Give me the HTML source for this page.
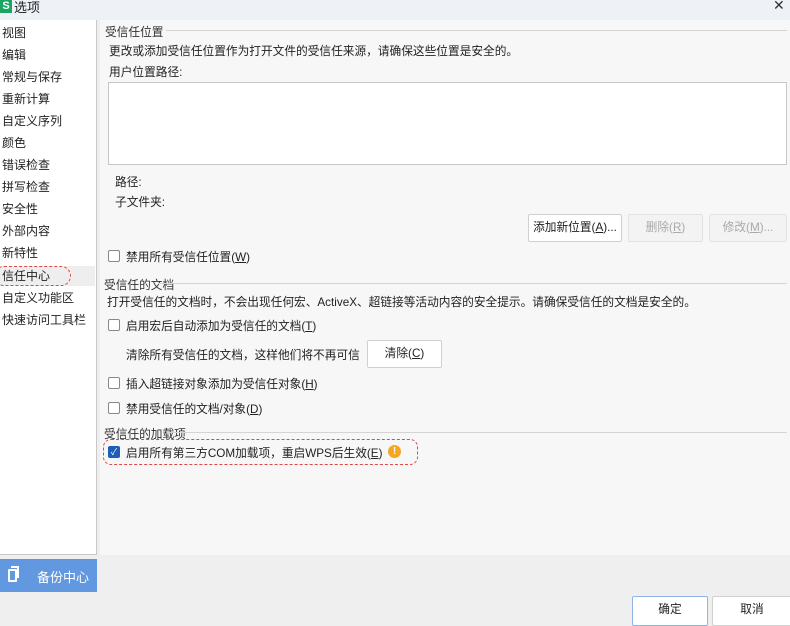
<!DOCTYPE html>
<html><head><meta charset="utf-8"><style>
*{margin:0;padding:0;box-sizing:border-box}
body{width:790px;height:620px;overflow:hidden;background:#efefef;font-family:"Liberation Sans","Noto Sans CJK SC",sans-serif;font-size:11.7px;color:#222;position:relative}
.abs{position:absolute;white-space:nowrap}
.title{left:0;top:0;width:790px;height:19px;background:#eef2f7}
.nav{left:0;top:20px;width:97px;height:535px;background:#fff;border-right:1px solid #c8c8c8;border-bottom:1px solid #c8c8c8}
.nav div{position:absolute;left:2px;font-size:12px;line-height:16px}
.content{left:100px;top:20px;width:690px;height:535px;background:#f7f7f7}
.sec{color:#333}
.line{height:1px;background:#d4d4d4}
.cb{width:12px;height:12px;border:1px solid #888;border-radius:2px;background:#fff}
.btn{background:#fff;border:1px solid #d0d0d0;border-radius:2px;text-align:center}
.dis{background:#f3f3f3;color:#aaa;border-color:#e2e2e2}
u{text-decoration:underline}
</style></head><body>
<div class="abs title"></div>
<div class="abs" style="left:0;top:0;width:12px;height:13px;background:#1aa564;color:#fff;font-size:11px;font-weight:bold;line-height:13px;text-align:center">S</div>
<div class="abs" style="left:14px;top:-3px;font-size:13px">选项</div>
<div class="abs" style="left:773px;top:-3px;font-size:14px;color:#333">✕</div>

<div class="abs nav">
<div style="top:5px">视图</div>
<div style="top:27px">编辑</div>
<div style="top:49px">常规与保存</div>
<div style="top:71px">重新计算</div>
<div style="top:93px">自定义序列</div>
<div style="top:115px">颜色</div>
<div style="top:137px">错误检查</div>
<div style="top:159px">拼写检查</div>
<div style="top:181px">安全性</div>
<div style="top:203px">外部内容</div>
<div style="top:225px">新特性</div>
<div style="top:246px;left:0;width:95px;height:20px;background:#eeeeee"></div>
<div style="top:246px;left:-6px;width:77px;height:20px;border:1px dashed #e04848;border-radius:10px"></div>
<div style="top:248px">信任中心</div>
<div style="top:270px">自定义功能区</div>
<div style="top:292px">快速访问工具栏</div>
</div>

<div class="abs content"></div>
<div class="abs sec" style="left:105px;top:23px">受信任位置</div>
<div class="abs line" style="left:166px;top:30px;width:621px"></div>
<div class="abs" style="left:109px;top:42px">更改或添加受信任位置作为打开文件的受信任来源，请确保这些位置是安全的。</div>
<div class="abs" style="left:109px;top:63px">用户位置路径:</div>
<div class="abs" style="left:108px;top:82px;width:679px;height:83px;background:#fff;border:1px solid #c6c6c6"></div>
<div class="abs" style="left:115px;top:173px">路径:</div>
<div class="abs" style="left:115px;top:193px">子文件夹:</div>
<div class="abs btn" style="left:528px;top:214px;width:94px;height:28px;line-height:26px">添加新位置(<u>A</u>)...</div>
<div class="abs btn dis" style="left:628px;top:214px;width:75px;height:28px;line-height:26px">删除(<u>R</u>)</div>
<div class="abs btn dis" style="left:709px;top:214px;width:78px;height:28px;line-height:26px">修改(<u>M</u>)...</div>
<div class="abs cb" style="left:108px;top:250px"></div>
<div class="abs" style="left:126px;top:248px">禁用所有受信任位置(<u>W</u>)</div>

<div class="abs sec" style="left:104px;top:276px">受信任的文档</div>
<div class="abs line" style="left:158px;top:283px;width:629px"></div>
<div class="abs" style="left:107px;top:293px">打开受信任的文档时，不会出现任何宏、ActiveX、超链接等活动内容的安全提示。请确保受信任的文档是安全的。</div>
<div class="abs cb" style="left:108px;top:319px"></div>
<div class="abs" style="left:126px;top:317px">启用宏后自动添加为受信任的文档(<u>T</u>)</div>
<div class="abs" style="left:126px;top:346px">清除所有受信任的文档，这样他们将不再可信</div>
<div class="abs btn" style="left:367px;top:340px;width:75px;height:28px;line-height:26px">清除(<u>C</u>)</div>
<div class="abs cb" style="left:108px;top:377px"></div>
<div class="abs" style="left:126px;top:375px">插入超链接对象添加为受信任对象(<u>H</u>)</div>
<div class="abs cb" style="left:108px;top:402px"></div>
<div class="abs" style="left:126px;top:400px">禁用受信任的文档/对象(<u>D</u>)</div>

<div class="abs sec" style="left:104px;top:425px">受信任的加载项</div>
<div class="abs line" style="left:167px;top:432px;width:620px"></div>
<div class="abs" style="left:103px;top:439px;width:315px;height:26px;border:1px dashed #e04848;border-radius:8px"></div>
<div class="abs" style="left:108px;top:446px;width:12px;height:12px;background:#1d5fb8;border-radius:2px;color:#fff;font-size:9px;line-height:12px;text-align:center">✓</div>
<div class="abs" style="left:126px;top:444px">启用所有第三方COM加载项，重启WPS后生效(<u>E</u>)</div>
<div class="abs" style="left:388px;top:445px;width:13px;height:13px;border-radius:50%;background:#f5a623;color:#fff;font-size:10px;font-weight:bold;line-height:13px;text-align:center">!</div>

<div class="abs" style="left:0;top:559px;width:97px;height:33px;background:#6298e0"></div>
<div class="abs" style="left:8px;top:569px;width:9px;height:13px;border:2px solid #fff;border-radius:1px;background:#6298e0"></div>
<div class="abs" style="left:11px;top:566px;width:8px;height:12px;border-top:2px solid #fff;border-right:2px solid #fff"></div>
<div class="abs" style="left:37px;top:567px;color:#fff;font-size:13px">备份中心</div>

<div class="abs btn" style="left:632px;top:596px;width:76px;height:30px;line-height:26px;border-color:#8fb4e4">确定</div>
<div class="abs btn" style="left:712px;top:596px;width:80px;height:30px;line-height:26px">取消</div>
</body></html>
